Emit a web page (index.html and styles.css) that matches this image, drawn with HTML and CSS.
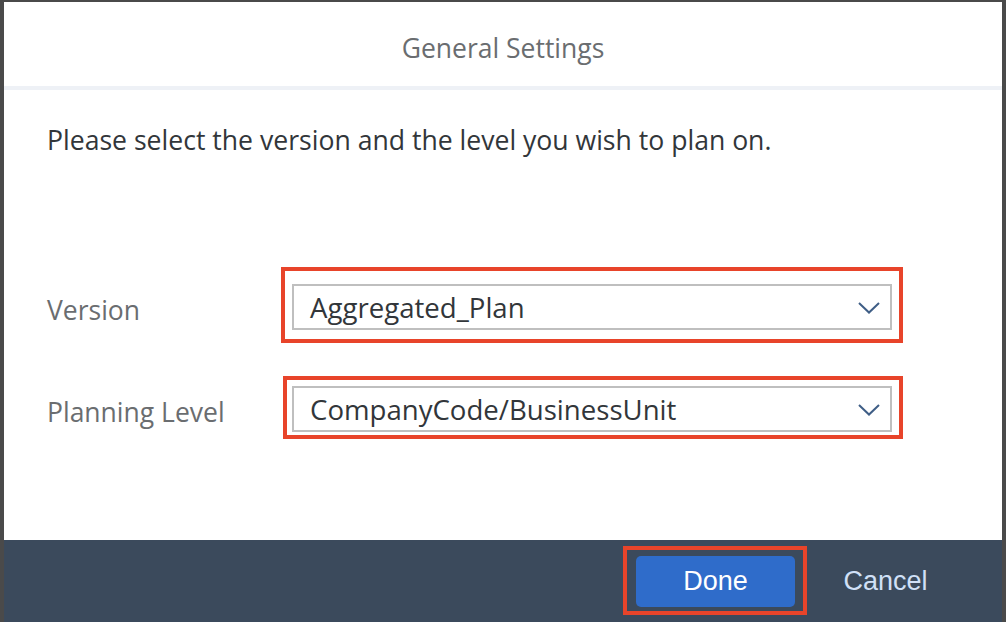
FILE: index.html
```html
<!DOCTYPE html>
<html lang="en">
<head>
<meta charset="utf-8">
<title>General Settings</title>
<link rel="stylesheet" href="styles.css">
</head>
<body>
<div class="dialog">
  <header class="dialog-header">
    <h1 class="dialog-title">General Settings</h1>
  </header>
  <main class="dialog-content">
    <p class="intro">Please select the version and the level you wish to plan on.</p>
    <div class="form">
      <div class="form-row">
        <label class="form-label">Version</label>
        <div class="select">
          <span class="select-value">Aggregated_Plan</span>
          <svg class="chevron" width="22" height="12" viewBox="0 0 22 12"><polyline points="1,1 11,10.5 21,1" fill="none" stroke="#3f5e86" stroke-width="2"/></svg>
          <span class="mark mark-version"></span>
        </div>
      </div>
      <div class="form-row">
        <label class="form-label">Planning Level</label>
        <div class="select">
          <span class="select-value">CompanyCode/BusinessUnit</span>
          <svg class="chevron" width="22" height="12" viewBox="0 0 22 12"><polyline points="1,1 11,10.5 21,1" fill="none" stroke="#3f5e86" stroke-width="2"/></svg>
          <span class="mark mark-level"></span>
        </div>
      </div>
    </div>
  </main>
  <footer class="dialog-footer">
    <button class="btn btn-primary">Done<span class="mark mark-done"></span></button>
    <button class="btn btn-ghost">Cancel</button>
  </footer>
</div>
</body>
</html>
```
FILE: styles.css
```css
* { box-sizing: border-box; }
html, body { margin: 0; height: 100%; }
body {
  background: #4a4a4a;
  padding: 2px 4px 0 4px;
  overflow: hidden;
  font-family: "Open Sans", "Noto Sans", sans-serif;
}
.dialog {
  width: 998px;
  height: 620px;
  background: #ffffff;
  display: flex;
  flex-direction: column;
}
.dialog-header {
  height: 88px;
  border-bottom: 4px solid #eef1f6;
  padding-top: 29px;
  text-align: center;
}
.dialog-title {
  margin: 0;
  font-weight: 400;
  font-size: 26.5px;
  line-height: 34px;
  color: #6a6d70;
}
.dialog-content {
  flex: 1;
  padding: 33px 0 0 43px;
}
.intro {
  margin: 0;
  font-size: 26.6px;
  line-height: 34px;
  color: #32363a;
}
.form {
  margin-top: 127px;
  display: flex;
  flex-direction: column;
  gap: 56px;
}
.form-row {
  display: flex;
  align-items: flex-start;
}
.form-label {
  width: 245px;
  padding-top: 9px;
  font-size: 26.5px;
  line-height: 34px;
  color: #6a6d70;
}
.select {
  position: relative;
  width: 600px;
  height: 46px;
  border: 2px solid #bfbfbf;
  display: flex;
  align-items: center;
  justify-content: space-between;
  padding: 0 10px 0 16px;
}
.select-value {
  font-size: 27.6px;
  line-height: 34px;
  color: #32363a;
}
.chevron { display: block; margin-top: 1px; }
.mark {
  position: absolute;
  border: 4px solid #e8442a;
  pointer-events: none;
}
.mark-version { left: -13px; top: -19px; right: -13px; bottom: -15px; }
.mark-level { left: -11px; top: -12px; right: -13px; bottom: -9px; }
.dialog-footer {
  height: 82px;
  background: #3b4a5c;
  display: flex;
  justify-content: flex-end;
  align-items: center;
  padding: 1px 54px 0 0;
  gap: 28px;
}
.btn {
  font-family: "Liberation Sans", Arial, sans-serif;
  font-size: 27px;
  border: none;
  height: 51px;
  cursor: pointer;
}
.btn-primary {
  position: relative;
  width: 159px;
  background: #2f6cca;
  color: #ffffff;
  border-radius: 5px;
}
.btn-ghost {
  width: 125px;
  background: transparent;
  color: #d0e0f7;
}
.mark-done { left: -13px; top: -10px; right: -12px; bottom: -8px; }
```
